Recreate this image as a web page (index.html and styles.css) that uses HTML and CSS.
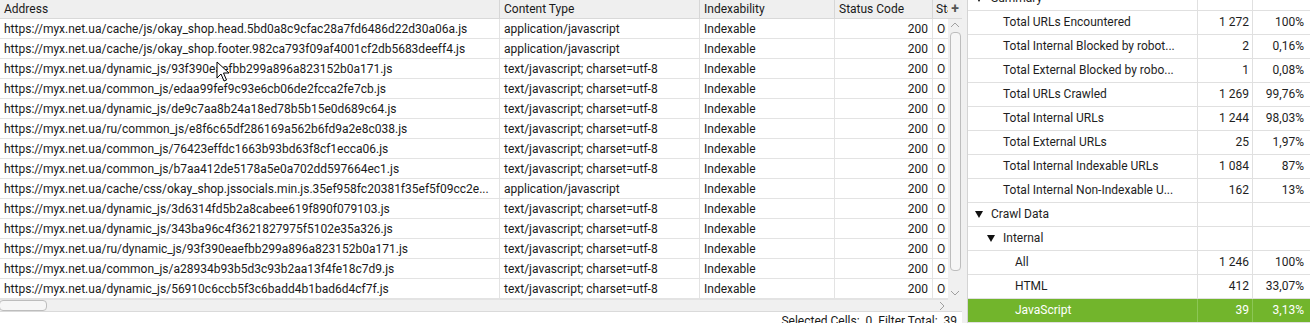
FILE: index.html
```html
<!DOCTYPE html>
<html lang="en">
<head>
    <meta charset="UTF-8">
    <title>Crawl Overview</title>
    <link rel="stylesheet" href="styles.css">
</head>
<body>
    <div class="app">
        <div class="left">
            <div class="grid-wrap">
                <div class="table">
                    <div class="row head">
                        <div class="c c-addr">Address</div>
                        <div class="c c-type">Content Type</div>
                        <div class="c c-idx">Indexability</div>
                        <div class="c c-code">Status Code</div>
                        <div class="c c-st">Status</div>
                    </div>
                    <div class="row"><div class="c c-addr">https://myx.net.ua/cache/js/okay_shop.head.5bd0a8c9cfac28a7fd6486d22d30a06a.js</div><div class="c c-type">application/javascript</div><div class="c c-idx">Indexable</div><div class="c c-code">200</div><div class="c c-st">OK</div></div>
                    <div class="row"><div class="c c-addr">https://myx.net.ua/cache/js/okay_shop.footer.982ca793f09af4001cf2db5683deeff4.js</div><div class="c c-type">application/javascript</div><div class="c c-idx">Indexable</div><div class="c c-code">200</div><div class="c c-st">OK</div></div>
                    <div class="row"><div class="c c-addr">https://myx.net.ua/dynamic_js/93f390eaefbb299a896a823152b0a171.js</div><div class="c c-type">text/javascript; charset=utf-8</div><div class="c c-idx">Indexable</div><div class="c c-code">200</div><div class="c c-st">OK</div></div>
                    <div class="row"><div class="c c-addr">https://myx.net.ua/common_js/edaa99fef9c93e6cb06de2fcca2fe7cb.js</div><div class="c c-type">text/javascript; charset=utf-8</div><div class="c c-idx">Indexable</div><div class="c c-code">200</div><div class="c c-st">OK</div></div>
                    <div class="row"><div class="c c-addr">https://myx.net.ua/dynamic_js/de9c7aa8b24a18ed78b5b15e0d689c64.js</div><div class="c c-type">text/javascript; charset=utf-8</div><div class="c c-idx">Indexable</div><div class="c c-code">200</div><div class="c c-st">OK</div></div>
                    <div class="row"><div class="c c-addr">https://myx.net.ua/ru/common_js/e8f6c65df286169a562b6fd9a2e8c038.js</div><div class="c c-type">text/javascript; charset=utf-8</div><div class="c c-idx">Indexable</div><div class="c c-code">200</div><div class="c c-st">OK</div></div>
                    <div class="row"><div class="c c-addr">https://myx.net.ua/common_js/76423effdc1663b93bd63f8cf1ecca06.js</div><div class="c c-type">text/javascript; charset=utf-8</div><div class="c c-idx">Indexable</div><div class="c c-code">200</div><div class="c c-st">OK</div></div>
                    <div class="row"><div class="c c-addr">https://myx.net.ua/common_js/b7aa412de5178a5e0a702dd597664ec1.js</div><div class="c c-type">text/javascript; charset=utf-8</div><div class="c c-idx">Indexable</div><div class="c c-code">200</div><div class="c c-st">OK</div></div>
                    <div class="row"><div class="c c-addr">https://myx.net.ua/cache/css/okay_shop.jssocials.min.js.35ef958fc20381f35ef5f09cc2e...</div><div class="c c-type">application/javascript</div><div class="c c-idx">Indexable</div><div class="c c-code">200</div><div class="c c-st">OK</div></div>
                    <div class="row"><div class="c c-addr">https://myx.net.ua/dynamic_js/3d6314fd5b2a8cabee619f890f079103.js</div><div class="c c-type">text/javascript; charset=utf-8</div><div class="c c-idx">Indexable</div><div class="c c-code">200</div><div class="c c-st">OK</div></div>
                    <div class="row"><div class="c c-addr">https://myx.net.ua/dynamic_js/343ba96c4f3621827975f5102e35a326.js</div><div class="c c-type">text/javascript; charset=utf-8</div><div class="c c-idx">Indexable</div><div class="c c-code">200</div><div class="c c-st">OK</div></div>
                    <div class="row"><div class="c c-addr">https://myx.net.ua/ru/dynamic_js/93f390eaefbb299a896a823152b0a171.js</div><div class="c c-type">text/javascript; charset=utf-8</div><div class="c c-idx">Indexable</div><div class="c c-code">200</div><div class="c c-st">OK</div></div>
                    <div class="row"><div class="c c-addr">https://myx.net.ua/common_js/a28934b93b5d3c93b2aa13f4fe18c7d9.js</div><div class="c c-type">text/javascript; charset=utf-8</div><div class="c c-idx">Indexable</div><div class="c c-code">200</div><div class="c c-st">OK</div></div>
                    <div class="row"><div class="c c-addr">https://myx.net.ua/dynamic_js/56910c6ccb5f3c6badd4b1bad6d4cf7f.js</div><div class="c c-type">text/javascript; charset=utf-8</div><div class="c c-idx">Indexable</div><div class="c c-code">200</div><div class="c c-st">OK</div></div>
                </div>
                <div class="vscroll">
                    <div class="vs-head">+</div>
                    <div class="vs-track">
                        <svg class="chev" width="10" height="6" viewBox="0 0 10 6"><polyline points="1,5 5,1 9,5" fill="none" stroke="#a0a0a0" stroke-width="1"/></svg>
                        <div class="vs-thumb"></div>
                        <svg class="chev" width="10" height="6" viewBox="0 0 10 6"><polyline points="1,1 5,5 9,1" fill="none" stroke="#a0a0a0" stroke-width="1"/></svg>
                    </div>
                </div>
            </div>
            <div class="hscroll">
                <div class="hs-track">
                    <div class="hs-thumb"></div>
                    <svg class="chev" width="6" height="10" viewBox="0 0 6 10"><polyline points="1,1 5,5 1,9" fill="none" stroke="#a0a0a0" stroke-width="1"/></svg>
                </div>
                <div class="hs-corner"></div>
            </div>
            <div class="status">Selected Cells:&nbsp; 0&nbsp; Filter Total:&nbsp; 39</div>
        </div>

        <div class="right">
            <div class="tree">
                <div class="trow"><div class="name d1"><span class="tri"></span>Summary</div><div class="num"></div><div class="pct"></div></div>
                <div class="trow"><div class="name d2">Total URLs Encountered</div><div class="num">1 272</div><div class="pct">100%</div></div>
                <div class="trow"><div class="name d2">Total Internal Blocked by robot...</div><div class="num">2</div><div class="pct">0,16%</div></div>
                <div class="trow"><div class="name d2">Total External Blocked by robo...</div><div class="num">1</div><div class="pct">0,08%</div></div>
                <div class="trow"><div class="name d2">Total URLs Crawled</div><div class="num">1 269</div><div class="pct">99,76%</div></div>
                <div class="trow"><div class="name d2">Total Internal URLs</div><div class="num">1 244</div><div class="pct">98,03%</div></div>
                <div class="trow"><div class="name d2">Total External URLs</div><div class="num">25</div><div class="pct">1,97%</div></div>
                <div class="trow"><div class="name d2">Total Internal Indexable URLs</div><div class="num">1 084</div><div class="pct">87%</div></div>
                <div class="trow"><div class="name d2">Total Internal Non-Indexable U...</div><div class="num">162</div><div class="pct">13%</div></div>
                <div class="trow"><div class="name d1"><span class="tri"></span>Crawl Data</div><div class="num"></div><div class="pct"></div></div>
                <div class="trow"><div class="name d2"><span class="tri"></span>Internal</div><div class="num"></div><div class="pct"></div></div>
                <div class="trow"><div class="name d3">All</div><div class="num">1 246</div><div class="pct">100%</div></div>
                <div class="trow"><div class="name d3">HTML</div><div class="num">412</div><div class="pct">33,07%</div></div>
                <div class="trow sel"><div class="name d3">JavaScript</div><div class="num">39</div><div class="pct">3,13%</div></div>
                <div class="trow"><div class="name d3"></div><div class="num"></div><div class="pct"></div></div>
            </div>
        </div>

        <svg class="cursor" width="14" height="22" viewBox="0 0 14 22">
            <path d="M1 1 L1 17 L5 13 L8 20 L10.5 19 L7.5 12 L13 12 Z" fill="#fff" stroke="#000" stroke-width="1" stroke-linejoin="round"/>
        </svg>
    </div>
</body>
</html>
```

FILE: styles.css
```css
body {
    margin: 0;
    padding: 0;
    background-color: #f0f0f0;
    color: #1a1a1a;
    font-family: Roboto, 'Liberation Sans', sans-serif;
    font-size: 12px;
    overflow: hidden;
}

.app {
    display: flex;
    width: 1310px;
    height: 323px;
    position: relative;
    overflow: hidden;
}

/* left: results table */
.left {
    width: 962px;
    display: flex;
    flex-direction: column;
    flex-shrink: 0;
}

.grid-wrap {
    display: flex;
    height: 299px;
}

.table {
    width: 948px;
    background-color: #fff;
    overflow: hidden;
}

.row {
    display: flex;
    height: 19px;
    border-bottom: 1px solid #e3e3e3;
    line-height: 20px;
}

.row.head {
    height: 18px;
    line-height: 18px;
    background-color: #efefef;
    border-bottom: 1px solid #d9d9d9;
}

.c {
    padding: 0 4px;
    white-space: nowrap;
    overflow: hidden;
    border-right: 1px solid #e3e3e3;
    box-sizing: border-box;
    flex-shrink: 0;
}

.head .c {
    border-right-color: #d6d6d6;
    text-align: left;
}

.c-addr { width: 500px; }
.c-type { width: 200px; }
.c-idx { width: 135px; }
.c-code { width: 98px; text-align: right; }
.c-st { width: 13px; padding: 0 0 0 4px; border-right: none; }
.head .c-st { width: 15px; padding-left: 3px; }

.vscroll {
    width: 14px;
    display: flex;
    flex-direction: column;
}

.vs-head {
    height: 19px;
    background-color: #efefef;
    border-bottom: 1px solid #d9d9d9;
    box-sizing: border-box;
    text-align: center;
    font-size: 14px;
    font-weight: bold;
    line-height: 16px;
    color: #555;
}

.vs-track {
    flex: 1;
    display: flex;
    flex-direction: column;
    align-items: center;
    padding: 2px 0 2px;
    background-color: #f0f0f0;
}

.vs-track .chev {
    margin: 1px 0;
}

.vs-thumb {
    width: 9px;
    flex: 1;
    margin: 3px 0 18px;
    background-color: #f6f6f6;
    border: 1px solid #bdbdbd;
    border-radius: 4px;
}

.hscroll {
    display: flex;
    height: 13px;
}

.hs-track {
    width: 948px;
    display: flex;
    align-items: center;
    justify-content: space-between;
    background-color: #f0f0f0;
    border-top: 1px solid #e3e3e3;
    box-sizing: border-box;
    padding-right: 3px;
}

.hs-thumb {
    width: 46px;
    height: 9px;
    margin-left: -1px;
    background-color: #f6f6f6;
    border: 1px solid #bdbdbd;
    border-radius: 4px;
}

.hs-corner {
    width: 14px;
    background-color: #f0f0f0;
}

.status {
    height: 11px;
    padding: 2px 5px 0 0;
    text-align: right;
    line-height: 14px;
    background-color: #fff;
    border-top: 1px solid #dadada;
    white-space: nowrap;
}

/* right: overview tree */
.right {
    flex: 1;
    margin-left: 5px;
    background-color: #fff;
    border-left: 1px solid #d4d4d4;
    overflow: hidden;
}

.tree {
    margin-top: -13px;
}

.trow {
    display: flex;
    height: 23px;
    line-height: 23px;
    border-bottom: 1px solid #e0e0e0;
    color: #1e1e1e;
}

.trow.sel {
    background-color: #72b52c;
    color: #fff;
}

.name {
    width: 230px;
    display: flex;
    align-items: center;
    white-space: nowrap;
    overflow: hidden;
    border-right: 1px solid #e0e0e0;
    box-sizing: border-box;
}

.name.d1 { padding-left: 7px; }
.name.d2 { padding-left: 35px; }
.name.d3 { padding-left: 47px; }
.name.d2 .tri { margin-left: -16px; }

.tri {
    width: 0;
    height: 0;
    border-left: 4px solid transparent;
    border-right: 4px solid transparent;
    border-top: 7px solid #111;
    margin-right: 8px;
}

.num {
    width: 55px;
    padding-right: 3px;
    text-align: right;
    border-right: 1px solid #e0e0e0;
    box-sizing: border-box;
}

.pct {
    flex: 1;
    padding-right: 6px;
    text-align: right;
}

.sel .name,
.sel .num {
    border-right-color: #8cc656;
}

.cursor {
    position: absolute;
    left: 216px;
    top: 61px;
}
```
